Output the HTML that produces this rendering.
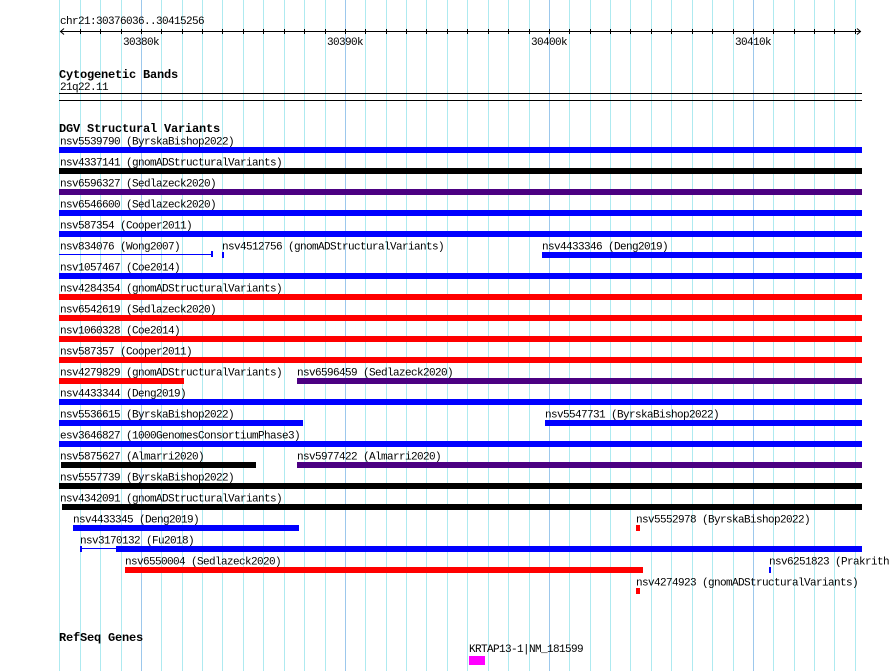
<!DOCTYPE html>
<html><head><meta charset="utf-8"><style>
html,body{margin:0;padding:0;background:#fff;width:890px;height:671px;overflow:hidden}
svg{display:block}
text{font-family:"Liberation Mono",monospace;font-size:11px;letter-spacing:-0.6px;fill:#000}
.b{font-weight:bold;font-size:12px;letter-spacing:-0.2px}
</style></head><body>
<svg width="890" height="671" xmlns="http://www.w3.org/2000/svg" shape-rendering="crispEdges">
<g stroke="#aeeaf0">
<line x1="59.5" y1="0" x2="59.5" y2="671"/><line x1="80.5" y1="0" x2="80.5" y2="671"/><line x1="100.5" y1="0" x2="100.5" y2="671"/><line x1="121.5" y1="0" x2="121.5" y2="671"/>
<line x1="161.5" y1="0" x2="161.5" y2="671"/><line x1="182.5" y1="0" x2="182.5" y2="671"/><line x1="202.5" y1="0" x2="202.5" y2="671"/><line x1="222.5" y1="0" x2="222.5" y2="671"/><line x1="243.5" y1="0" x2="243.5" y2="671"/><line x1="263.5" y1="0" x2="263.5" y2="671"/><line x1="284.5" y1="0" x2="284.5" y2="671"/><line x1="304.5" y1="0" x2="304.5" y2="671"/><line x1="325.5" y1="0" x2="325.5" y2="671"/>
<line x1="365.5" y1="0" x2="365.5" y2="671"/><line x1="386.5" y1="0" x2="386.5" y2="671"/><line x1="406.5" y1="0" x2="406.5" y2="671"/><line x1="426.5" y1="0" x2="426.5" y2="671"/><line x1="447.5" y1="0" x2="447.5" y2="671"/><line x1="467.5" y1="0" x2="467.5" y2="671"/><line x1="488.5" y1="0" x2="488.5" y2="671"/><line x1="508.5" y1="0" x2="508.5" y2="671"/><line x1="529.5" y1="0" x2="529.5" y2="671"/>
<line x1="569.5" y1="0" x2="569.5" y2="671"/><line x1="590.5" y1="0" x2="590.5" y2="671"/><line x1="610.5" y1="0" x2="610.5" y2="671"/><line x1="630.5" y1="0" x2="630.5" y2="671"/><line x1="651.5" y1="0" x2="651.5" y2="671"/><line x1="671.5" y1="0" x2="671.5" y2="671"/><line x1="692.5" y1="0" x2="692.5" y2="671"/><line x1="712.5" y1="0" x2="712.5" y2="671"/><line x1="733.5" y1="0" x2="733.5" y2="671"/>
<line x1="773.5" y1="0" x2="773.5" y2="671"/><line x1="794.5" y1="0" x2="794.5" y2="671"/><line x1="814.5" y1="0" x2="814.5" y2="671"/><line x1="834.5" y1="0" x2="834.5" y2="671"/><line x1="855.5" y1="0" x2="855.5" y2="671"/>
</g>
<g stroke="#9cc8ec">
<line x1="141.5" y1="0" x2="141.5" y2="671"/><line x1="345.5" y1="0" x2="345.5" y2="671"/><line x1="549.5" y1="0" x2="549.5" y2="671"/><line x1="753.5" y1="0" x2="753.5" y2="671"/>
</g>
<g stroke="#000">
<line x1="80.5" y1="29" x2="80.5" y2="34"/><line x1="100.5" y1="29" x2="100.5" y2="34"/><line x1="121.5" y1="29" x2="121.5" y2="34"/><line x1="141.5" y1="29" x2="141.5" y2="34"/><line x1="161.5" y1="29" x2="161.5" y2="34"/><line x1="182.5" y1="29" x2="182.5" y2="34"/><line x1="202.5" y1="29" x2="202.5" y2="34"/><line x1="222.5" y1="29" x2="222.5" y2="34"/><line x1="243.5" y1="29" x2="243.5" y2="34"/><line x1="263.5" y1="29" x2="263.5" y2="34"/><line x1="284.5" y1="29" x2="284.5" y2="34"/><line x1="304.5" y1="29" x2="304.5" y2="34"/><line x1="325.5" y1="29" x2="325.5" y2="34"/><line x1="345.5" y1="29" x2="345.5" y2="34"/><line x1="365.5" y1="29" x2="365.5" y2="34"/><line x1="386.5" y1="29" x2="386.5" y2="34"/><line x1="406.5" y1="29" x2="406.5" y2="34"/><line x1="426.5" y1="29" x2="426.5" y2="34"/><line x1="447.5" y1="29" x2="447.5" y2="34"/><line x1="467.5" y1="29" x2="467.5" y2="34"/><line x1="488.5" y1="29" x2="488.5" y2="34"/><line x1="508.5" y1="29" x2="508.5" y2="34"/><line x1="529.5" y1="29" x2="529.5" y2="34"/><line x1="549.5" y1="29" x2="549.5" y2="34"/><line x1="569.5" y1="29" x2="569.5" y2="34"/><line x1="590.5" y1="29" x2="590.5" y2="34"/><line x1="610.5" y1="29" x2="610.5" y2="34"/><line x1="630.5" y1="29" x2="630.5" y2="34"/><line x1="651.5" y1="29" x2="651.5" y2="34"/><line x1="671.5" y1="29" x2="671.5" y2="34"/><line x1="692.5" y1="29" x2="692.5" y2="34"/><line x1="712.5" y1="29" x2="712.5" y2="34"/><line x1="733.5" y1="29" x2="733.5" y2="34"/><line x1="753.5" y1="29" x2="753.5" y2="34"/><line x1="773.5" y1="29" x2="773.5" y2="34"/><line x1="794.5" y1="29" x2="794.5" y2="34"/><line x1="814.5" y1="29" x2="814.5" y2="34"/><line x1="834.5" y1="29" x2="834.5" y2="34"/><line x1="855.5" y1="29" x2="855.5" y2="34"/>
</g>
<text x="60" y="24">chr21:30376036..30415256</text>
<line x1="60" y1="31.5" x2="861" y2="31.5" stroke="#000"/>
<polyline points="64,28.5 60.5,31.5 64,34.5" fill="none" stroke="#000" shape-rendering="auto"/>
<polyline points="857,28.5 860.5,31.5 857,34.5" fill="none" stroke="#000" shape-rendering="auto"/>
<text x="141" y="45" text-anchor="middle">30380k</text>
<text x="345" y="45" text-anchor="middle">30390k</text>
<text x="549" y="45" text-anchor="middle">30400k</text>
<text x="753" y="45" text-anchor="middle">30410k</text>

<text class="b" x="59" y="78">Cytogenetic Bands</text>
<text x="60" y="90">21q22.11</text>
<rect x="59" y="93" width="803" height="1" fill="#000"/>
<rect x="59" y="100" width="803" height="1" fill="#000"/>

<text class="b" x="59" y="132">DGV Structural Variants</text>

<text x="60" y="144.5">nsv5539790 (ByrskaBishop2022)</text><rect x="59" y="147" width="803" height="6" fill="#0000ff"/>
<text x="60" y="165.5">nsv4337141 (gnomADStructuralVariants)</text><rect x="59" y="168" width="803" height="6" fill="#000"/>
<text x="60" y="186.5">nsv6596327 (Sedlazeck2020)</text><rect x="59" y="189" width="803" height="6" fill="#4b0082"/>
<text x="60" y="207.5">nsv6546600 (Sedlazeck2020)</text><rect x="59" y="210" width="803" height="6" fill="#0000ff"/>
<text x="60" y="228.5">nsv587354 (Cooper2011)</text><rect x="59" y="231" width="803" height="6" fill="#0000ff"/>
<text x="60" y="249.5">nsv834076 (Wong2007)</text><rect x="59" y="254" width="153" height="1" fill="#0000ff"/><rect x="211" y="251" width="2" height="6" fill="#0000ff"/>
<text x="222" y="249.5">nsv4512756 (gnomADStructuralVariants)</text><rect x="222" y="252" width="2" height="6" fill="#0000ff"/>
<text x="542" y="249.5">nsv4433346 (Deng2019)</text><rect x="542" y="252" width="320" height="6" fill="#0000ff"/>
<text x="60" y="270.5">nsv1057467 (Coe2014)</text><rect x="59" y="273" width="803" height="6" fill="#0000ff"/>
<text x="60" y="291.5">nsv4284354 (gnomADStructuralVariants)</text><rect x="59" y="294" width="803" height="6" fill="#ff0000"/>
<text x="60" y="312.5">nsv6542619 (Sedlazeck2020)</text><rect x="59" y="315" width="803" height="6" fill="#ff0000"/>
<text x="60" y="333.5">nsv1060328 (Coe2014)</text><rect x="59" y="336" width="803" height="6" fill="#ff0000"/>
<text x="60" y="354.5">nsv587357 (Cooper2011)</text><rect x="59" y="357" width="803" height="6" fill="#ff0000"/>
<text x="60" y="375.5">nsv4279829 (gnomADStructuralVariants)</text><rect x="59" y="378" width="125" height="6" fill="#ff0000"/>
<text x="297" y="375.5">nsv6596459 (Sedlazeck2020)</text><rect x="297" y="378" width="565" height="6" fill="#4b0082"/>
<text x="60" y="396.5">nsv4433344 (Deng2019)</text><rect x="59" y="399" width="803" height="6" fill="#0000ff"/>
<text x="60" y="417.5">nsv5536615 (ByrskaBishop2022)</text><rect x="59" y="420" width="244" height="6" fill="#0000ff"/>
<text x="545" y="417.5">nsv5547731 (ByrskaBishop2022)</text><rect x="545" y="420" width="317" height="6" fill="#0000ff"/>
<text x="60" y="438.5">esv3646827 (1000GenomesConsortiumPhase3)</text><rect x="59" y="441" width="803" height="6" fill="#0000ff"/>
<text x="60" y="459.5">nsv5875627 (Almarri2020)</text><rect x="61" y="462" width="195" height="6" fill="#000"/>
<text x="297" y="459.5">nsv5977422 (Almarri2020)</text><rect x="297" y="462" width="565" height="6" fill="#4b0082"/>
<text x="60" y="480.5">nsv5557739 (ByrskaBishop2022)</text><rect x="59" y="483" width="803" height="6" fill="#000"/>
<text x="60" y="501.5">nsv4342091 (gnomADStructuralVariants)</text><rect x="62" y="504" width="800" height="6" fill="#000"/>
<text x="73" y="522.5">nsv4433345 (Deng2019)</text><rect x="73" y="525" width="226" height="6" fill="#0000ff"/>
<text x="636" y="522.5">nsv5552978 (ByrskaBishop2022)</text><rect x="636" y="525" width="4" height="6" fill="#ff0000"/>
<text x="80" y="543.5">nsv3170132 (Fu2018)</text><rect x="80" y="548" width="36" height="1" fill="#0000ff"/><rect x="80" y="546" width="2" height="6" fill="#0000ff"/><rect x="116" y="546" width="746" height="6" fill="#0000ff"/>
<text x="125" y="564.5">nsv6550004 (Sedlazeck2020)</text><rect x="125" y="567" width="518" height="6" fill="#ff0000"/>
<text x="769" y="564.5">nsv6251823 (Prakrith</text><rect x="769" y="567" width="2" height="6" fill="#0000ff"/>
<text x="636" y="585.5">nsv4274923 (gnomADStructuralVariants)</text><rect x="636" y="588" width="4" height="6" fill="#ff0000"/>

<text class="b" x="59" y="641">RefSeq Genes</text>
<text x="469" y="652">KRTAP13-1|NM_181599</text>
<rect x="469" y="656" width="16" height="9" fill="#ff00ff"/>
</svg>
</body></html>
